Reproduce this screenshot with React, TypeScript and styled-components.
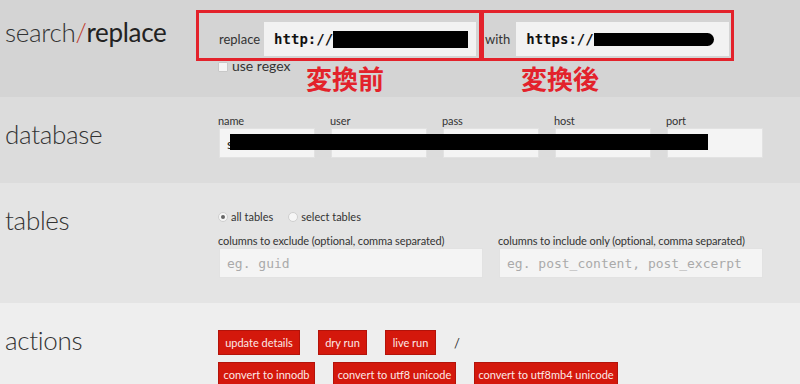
import React from "react";
import styled, { createGlobalStyle } from "styled-components";

const GlobalStyle = createGlobalStyle`
  html, body {
    margin: 0;
    padding: 0;
  }
  body {
    width: 800px;
    height: 384px;
    overflow: hidden;
    background: #eeeeee;
    color: #333;
    font-family: Lato, "Noto Sans", sans-serif;
  }
`;

const Section = styled.section<{ $bg: string; $h: number }>`
  display: flex;
  height: ${(p) => p.$h}px;
  background: ${(p) => p.$bg};
`;

const Heading = styled.h2<{ $top: number }>`
  width: 218px;
  flex-shrink: 0;
  box-sizing: border-box;
  margin: 0;
  padding: ${(p) => p.$top}px 0 0 5px;
  font-size: 26px;
  font-weight: 300;
  letter-spacing: -0.3px;
  line-height: 1;
  color: #333;
`;

const Slash = styled.span`
  color: #c0392b;
`;

const Strong = styled.span`
  font-weight: 400;
  color: #222;
`;

const Content = styled.div<{ $top: number }>`
  position: relative;
  flex: 1;
  display: flex;
  flex-direction: column;
  padding-top: ${(p) => p.$top}px;
`;

const Boxes = styled.div`
  display: flex;
`;

const Marked = styled.div<{ $ml: number; $w: number; $pl: number }>`
  position: relative;
  display: flex;
  align-items: center;
  box-sizing: border-box;
  width: ${(p) => p.$w}px;
  height: 51px;
  margin-left: ${(p) => p.$ml}px;
  padding: 9px 0 2px ${(p) => p.$pl}px;
  border: 3px solid #e3222b;
`;

const FieldLabel = styled.span<{ $gap: number }>`
  margin-right: ${(p) => p.$gap}px;
  font-size: 13px;
  color: #333;
`;

const UrlField = styled.div<{ $w: number }>`
  position: relative;
  box-sizing: border-box;
  width: ${(p) => p.$w}px;
  height: 34px;
  padding: 0 8px 0 10px;
  background: #f2f2f2;
  display: flex;
  align-items: center;
  font-family: "DejaVu Sans Mono", "Liberation Mono", monospace;
  font-size: 14px;
  font-weight: bold;
  color: #111;
`;

const Redact = styled.span<{ $w: number; $h: number; $round?: boolean }>`
  display: inline-block;
  width: ${(p) => p.$w}px;
  height: ${(p) => p.$h}px;
  background: #000;
  border-radius: ${(p) => (p.$round ? "0 7px 7px 0" : "0")};
`;

const Note = styled.span<{ $left: number }>`
  position: absolute;
  top: calc(100% + 7px);
  left: ${(p) => p.$left}px;
  font-family: "Noto Sans CJK JP", sans-serif;
  font-size: 26px;
  font-weight: bold;
  line-height: 1;
  color: #e3222b;
  white-space: nowrap;
`;

const CheckRow = styled.label`
  display: flex;
  align-items: center;
  gap: 4px;
  margin-top: -3px;
  font-size: 14px;
  color: #333;
  line-height: 16px;
`;

const Check = styled.span`
  width: 8px;
  height: 8px;
  margin-top: 2px;
  border: 1px solid #c8c8c8;
  background: #f4f4f4;
  border-radius: 1px;
`;

const FieldRow = styled.div<{ $gap: number }>`
  display: flex;
  gap: ${(p) => p.$gap}px;
`;

const FieldGroup = styled.div`
  display: flex;
  flex-direction: column;
`;

const SmallLabel = styled.span`
  font-size: 11px;
  letter-spacing: -0.1px;
  line-height: 13px;
  margin-bottom: 1px;
  color: #333;
`;

const Field = styled.div<{ $w: number; $h: number }>`
  box-sizing: border-box;
  width: ${(p) => p.$w}px;
  height: ${(p) => p.$h}px;
  margin-left: 1px;
  padding: 0 7px;
  display: flex;
  align-items: center;
  background: #f4f4f4;
  border: 1px solid #e2e2e2;
  font-family: "DejaVu Sans Mono", "Liberation Mono", monospace;
  font-size: 13px;
  color: #aaa;
`;

const DbText = styled.span`
  font-family: Lato, sans-serif;
  font-size: 14px;
  color: #222;
`;

const DbRedact = styled.span`
  position: absolute;
  left: 12px;
  top: 37px;
  width: 478px;
  height: 16px;
  background: #000;
`;

const RadioRow = styled.div`
  display: flex;
  align-items: center;
  font-size: 11px;
  line-height: 14px;
  margin-bottom: 10px;
`;

const Radio = styled.span<{ $on?: boolean }>`
  position: relative;
  width: 8px;
  height: 8px;
  margin-right: 3px;
  border: 1px solid #cfcfcf;
  border-radius: 50%;
  background: #f6f6f6;
  &::after {
    content: "";
    display: ${(p) => (p.$on ? "block" : "none")};
    position: absolute;
    left: 2px;
    top: 2px;
    width: 4px;
    height: 4px;
    border-radius: 50%;
    background: #666;
  }
`;

const RadioText = styled.span<{ $gap: number }>`
  margin-right: ${(p) => p.$gap}px;
`;

const ButtonRows = styled.div`
  display: flex;
  flex-direction: column;
  gap: 7px;
`;

const ButtonRow = styled.div`
  display: flex;
  align-items: center;
  gap: 18px;
`;

const Button = styled.button<{ $w: number }>`
  box-sizing: border-box;
  width: ${(p) => p.$w}px;
  height: 25px;
  padding: 0;
  background: #d4180c;
  border: 1px solid #b3130a;
  color: #fbe9e7;
  font-family: Lato, sans-serif;
  font-size: 11px;
  cursor: pointer;
`;

const Sep = styled.span`
  font-size: 13px;
  color: #333;
`;

const dbFields = ["name", "user", "pass", "host", "port"];

export default function App() {
  return (
    <>
      <GlobalStyle />
      <Section $bg="#d4d4d4" $h={97}>
        <Heading $top={19}>
          search<Slash>/</Slash>
          <Strong>replace</Strong>
        </Heading>
        <Content $top={10}>
          <Boxes>
            <Marked $ml={-22} $w={286} $pl={20}>
              <FieldLabel $gap={4}>replace</FieldLabel>
              <UrlField $w={212}>
                http://
                <Redact $w={141} $h={17} />
              </UrlField>
              <Note $left={107}>変換前</Note>
            </Marked>
            <Marked $ml={-1} $w={253} $pl={1}>
              <FieldLabel $gap={6}>with</FieldLabel>
              <UrlField $w={213}>
                https://
                <Redact $w={120} $h={13} $round />
              </UrlField>
              <Note $left={37}>変換後</Note>
            </Marked>
          </Boxes>
          <CheckRow>
            <Check />
            use regex
          </CheckRow>
        </Content>
      </Section>

      <Section $bg="#dcdcdc" $h={86}>
        <Heading $top={24}>database</Heading>
        <Content $top={17}>
          <FieldRow $gap={15}>
            {dbFields.map((f, i) => (
              <FieldGroup key={f}>
                <SmallLabel>{f}</SmallLabel>
                <Field $w={96} $h={30}>
                  {i === 0 && <DbText>s</DbText>}
                </Field>
              </FieldGroup>
            ))}
          </FieldRow>
          <DbRedact />
        </Content>
      </Section>

      <Section $bg="#e4e4e4" $h={120}>
        <Heading $top={24}>tables</Heading>
        <Content $top={27}>
          <RadioRow>
            <Radio $on />
            <RadioText $gap={15}>all tables</RadioText>
            <Radio />
            <RadioText $gap={0}>select tables</RadioText>
          </RadioRow>
          <FieldRow $gap={15}>
            <FieldGroup>
              <SmallLabel>columns to exclude (optional, comma separated)</SmallLabel>
              <Field $w={264} $h={30}>eg. guid</Field>
            </FieldGroup>
            <FieldGroup>
              <SmallLabel>columns to include only (optional, comma separated)</SmallLabel>
              <Field $w={264} $h={30}>eg. post_content, post_excerpt</Field>
            </FieldGroup>
          </FieldRow>
        </Content>
      </Section>

      <Section $bg="#eeeeee" $h={81}>
        <Heading $top={24}>actions</Heading>
        <Content $top={27}>
          <ButtonRows>
            <ButtonRow>
              <Button $w={82}>update details</Button>
              <Button $w={49}>dry run</Button>
              <Button $w={51}>live run</Button>
              <Sep>/</Sep>
            </ButtonRow>
            <ButtonRow>
              <Button $w={97}>convert to innodb</Button>
              <Button $w={123}>convert to utf8 unicode</Button>
              <Button $w={144}>convert to utf8mb4 unicode</Button>
            </ButtonRow>
          </ButtonRows>
        </Content>
      </Section>
    </>
  );
}
